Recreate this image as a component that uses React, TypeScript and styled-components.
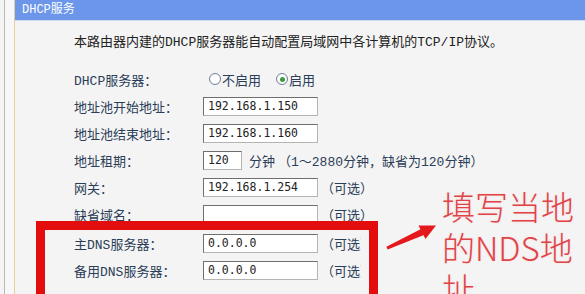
import React from 'react'
import styled, { createGlobalStyle } from 'styled-components'

const GlobalStyle = createGlobalStyle`
  html, body {
    margin: 0;
    padding: 0;
    background: #f4f4f4;
  }
`

const Page = styled.div`
  display: flex;
  flex-flow: row nowrap;
  width: 585px;
  height: 294px;
  overflow: hidden;
  position: relative;
  font-family: 'Liberation Mono', 'Noto Sans CJK SC', monospace;
`

const LeftRail = styled.div`
  width: 9px;
  margin-left: 4px;
  border-left: 1px solid #b9b9b9;
  background: #f7f7f7;
  flex: none;
`

const Panel = styled.div`
  flex: 1;
  display: flex;
  flex-flow: column nowrap;
  border-left: 1px solid #e6cf9c;
  background: #f4f4f4;
`

const TitleBar = styled.div`
  height: 20px;
  line-height: 20px;
  padding-left: 7px;
  background: #6b96ea;
  border-bottom: 1px solid #cfdaee;
  color: #ffffff;
  font-size: 12px;
`

const Body = styled.div`
  padding: 12px 0 0 59px;
`

const Intro = styled.div`
  line-height: 20px;
  height: 20px;
  font-size: 13px;
  color: #222222;
  white-space: nowrap;
`

const Form = styled.div`
  margin-top: 12.5px;
  display: flex;
  flex-flow: column nowrap;
`

const Row = styled.div`
  display: flex;
  align-items: center;
  height: 27px;
`

const Label = styled.div`
  width: 129px;
  flex: none;
  font-size: 13px;
  color: #2b3d57;
  white-space: nowrap;
`

const TextInput = styled.div<{ w?: number }>`
  box-sizing: border-box;
  width: ${({ w }) => w ?? 115}px;
  height: 19px;
  line-height: 17px;
  padding-left: 4px;
  flex: none;
  background: #ffffff;
  border: 1px solid #6e6e6e;
  border-right-color: #b4b4b4;
  border-bottom-color: #b4b4b4;
  font-family: 'DejaVu Sans Mono', monospace;
  font-size: 11.5px;
  color: #222222;
`

const Hint = styled.span<{ gap?: number }>`
  margin-left: ${({ gap }) => gap ?? 3}px;
  font-size: 13px;
  color: #2b3d57;
  white-space: nowrap;
`

const RadioGroup = styled.div`
  display: flex;
  align-items: center;
  gap: 15px;
  margin-left: 6px;
`

const RadioItem = styled.label`
  display: flex;
  align-items: center;
  gap: 1px;
  font-size: 13px;
  color: #2b3d57;
`

const RadioDot = styled.span<{ checked?: boolean }>`
  box-sizing: border-box;
  width: 12px;
  height: 12px;
  border-radius: 50%;
  border: 1px solid #6f8296;
  background: radial-gradient(circle, #ffffff 55%, #e3e6ea 100%);
  display: flex;
  align-items: center;
  justify-content: center;

  &::after {
    content: '';
    width: 5px;
    height: 5px;
    border-radius: 50%;
    background: ${({ checked }) => (checked ? '#3f9b3c' : 'transparent')};
  }
`

const DnsGroup = styled.div`
  position: relative;
  z-index: 1;
  box-sizing: border-box;
  margin: -6.5px 0 0 -38px;
  width: 342px;
  height: 80px;
  padding-left: 29px;
  border: 9px solid #e30d0d;
  border-bottom: none;
`

const DnsRow = styled(Row)`
  overflow: hidden;
  width: 287px;
`

const Callout = styled.div`
  position: absolute;
  left: 442px;
  top: 186px;
  width: 136px;
  font-family: 'Noto Sans CJK SC', sans-serif;
  font-weight: 300;
  font-size: 33px;
  line-height: 41px;
  color: #df4448;
  text-shadow: 0 0 2px #f9d4d4;
  z-index: 2;
`

const Arrow = styled.svg`
  position: absolute;
  left: 385px;
  top: 222px;
  z-index: 2;
`

function Radio({ checked, children }: { checked?: boolean; children: React.ReactNode }) {
  return (
    <RadioItem>
      <RadioDot checked={checked} />
      {children}
    </RadioItem>
  )
}

export default function App() {
  return (
    <Page>
      <GlobalStyle />
      <LeftRail />
      <Panel>
        <TitleBar>DHCP服务</TitleBar>
        <Body>
          <Intro>本路由器内建的DHCP服务器能自动配置局域网中各计算机的TCP/IP协议。</Intro>
          <Form>
            <Row>
              <Label>DHCP服务器：</Label>
              <RadioGroup>
                <Radio>不启用</Radio>
                <Radio checked>启用</Radio>
              </RadioGroup>
            </Row>
            <Row>
              <Label>地址池开始地址：</Label>
              <TextInput>192.168.1.150</TextInput>
            </Row>
            <Row>
              <Label>地址池结束地址：</Label>
              <TextInput>192.168.1.160</TextInput>
            </Row>
            <Row>
              <Label>地址租期：</Label>
              <TextInput w={39}>120</TextInput>
              <Hint gap={7}>分钟</Hint>
              <Hint>（1～2880分钟，缺省为120分钟）</Hint>
            </Row>
            <Row>
              <Label>网关：</Label>
              <TextInput>192.168.1.254</TextInput>
              <Hint>（可选）</Hint>
            </Row>
            <Row>
              <Label>缺省域名：</Label>
              <TextInput />
              <Hint>（可选）</Hint>
            </Row>
            <DnsGroup>
              <DnsRow>
                <Label>主DNS服务器：</Label>
                <TextInput>0.0.0.0</TextInput>
                <Hint>（可选）</Hint>
              </DnsRow>
              <DnsRow>
                <Label>备用DNS服务器：</Label>
                <TextInput>0.0.0.0</TextInput>
                <Hint>（可选）</Hint>
              </DnsRow>
            </DnsGroup>
          </Form>
        </Body>
      </Panel>
      <Arrow width="56" height="30" viewBox="0 0 56 30">
        <polygon points="2.6,27.6 1.4,24.8 36,7 39,13" fill="#e3191c" />
        <polygon points="51,3.5 33.5,3.5 40.5,17" fill="#e3191c" />
      </Arrow>
      <Callout>填写当地的NDS地址</Callout>
    </Page>
  )
}
